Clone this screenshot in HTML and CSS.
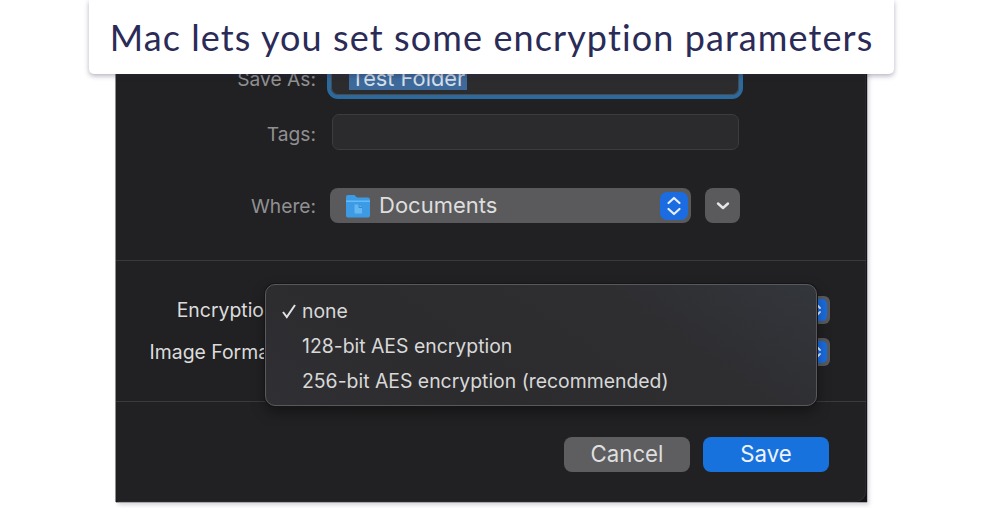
FILE: index.html
```html
<!DOCTYPE html>
<html lang="en">
<head>
  <meta charset="UTF-8">
  <title>Mac lets you set some encryption parameters</title>
  <link rel="stylesheet" href="styles.css">
</head>
<body>
  <div class="caption">Mac lets you set some encryption parameters</div>

  <div class="window">
    <div class="window_inner">
      <section class="top">
        <div class="row save_row">
          <span class="label dim">Save As:</span>
          <div class="save_input"><span class="selected">Test Folder</span></div>
        </div>
        <div class="row tags_row">
          <span class="label dim tags_label">Tags:</span>
          <div class="tags_input"></div>
        </div>
        <div class="row where_row">
          <span class="label dim">Where:</span>
          <div class="where_select">
            <svg class="folder" viewBox="0 0 26 24" width="26" height="24">
              <path d="M1 3C1 1.800 1.800 1 3 1h6.500l2.500 2.500h11C24 3.500 25 4.500 25 6v15.500c0 1.200-.8 2-2 2H3c-1.200 0-2-.8-2-2z" fill="#3d9be6"/>
              <path d="M1 6.500h24V8H1z" fill="#63bdf6"/>
              <path d="M9.500 10.500h4.500l3 3v6h-7.500z" fill="#65b7f1"/>
              <path d="M14 10.500v3h3" fill="none" stroke="#2f8ad6" stroke-width="1"/>
            </svg>
            <span class="where_text">Documents</span>
            <span class="stepper">
              <svg viewBox="0 0 28 28" width="28" height="28">
                <path d="M8.500 11l5.500-5 5.500 5M8.500 17l5.500 5 5.500-5" fill="none" stroke="#e8eefa" stroke-width="2.200" stroke-linecap="round" stroke-linejoin="round"/>
              </svg>
            </span>
          </div>
          <div class="more_button">
            <svg viewBox="0 0 14 10" width="14" height="10">
              <path d="M2 2.500l5 4.500 5-4.500" fill="none" stroke="#e6e6e6" stroke-width="2.400" stroke-linecap="round" stroke-linejoin="round"/>
            </svg>
          </div>
        </div>
      </section>

      <section class="middle">
        <div class="row">
          <span class="label short">Encryption:</span>
          <div class="small_select">
            <span class="small_stepper">
              <svg viewBox="0 0 22 22" width="22" height="22">
                <path d="M7 9l4-4 4 4M7 13l4 4 4-4" fill="none" stroke="#e8eefa" stroke-width="1.800" stroke-linecap="round" stroke-linejoin="round"/>
              </svg>
            </span>
          </div>
        </div>
        <div class="row">
          <span class="label short">Image Format:</span>
          <div class="small_select">
            <span class="small_stepper">
              <svg viewBox="0 0 22 22" width="22" height="22">
                <path d="M7 9l4-4 4 4M7 13l4 4 4-4" fill="none" stroke="#e8eefa" stroke-width="1.800" stroke-linecap="round" stroke-linejoin="round"/>
              </svg>
            </span>
          </div>
        </div>
      </section>

      <section class="bottom">
        <div class="btn cancel">Cancel</div>
        <div class="btn save">Save</div>
      </section>
    </div>

    <ul class="menu">
      <li>
        <svg class="check" viewBox="0 0 16 16" width="16" height="16">
          <path d="M2 9l3.800 5L14 2" fill="none" stroke="#e2e2e2" stroke-width="2"/>
        </svg>
        none
      </li>
      <li>128-bit AES encryption</li>
      <li>256-bit AES encryption (recommended)</li>
    </ul>
  </div>
</body>
</html>
```

FILE: styles.css
```css
* {
  margin: 0;
  padding: 0;
  box-sizing: border-box;
  list-style-type: none;
}

html {font-family: "Inter", "Liberation Sans", sans-serif;}

body {
  background-color: white;
  width: 981px;
  height: 508px;
  overflow: hidden;
  position: relative;
}

.caption {
  position: absolute;
  top: 0;
  left: 89px;
  z-index: 2;
  width: 805px;
  height: 74px;
  padding-top: 14px;
  background-color: white;
  border-radius: 0 0 5px 5px;
  box-shadow: 0 2px 5px rgba(40,40,80,.35);
  color: #2b2b57;
  font-family: "Lato", sans-serif;
  font-size: 36px;
  font-variant-ligatures: none;
  letter-spacing: 1.1px;
  line-height: 47px;
  text-align: center;
  white-space: nowrap;
}

.window {
  position: relative;
  margin-left: 116px;
  width: 751px;
  height: 502px;
  padding-right: 1px;
  background-color: #151517;
  box-shadow: -1px 0 0 #8d8d92, 1px 0 0 #b8b8bc, 0 1px 0 #a8a8ac, 2px 3px 4px rgba(120,120,140,.3);
  color: #dcdcdc;
  font-size: 19.4px;
}

.window_inner {
  height: 100%;
  background-color: #212123;
  border-radius: 0 0 10px 4px;
  box-shadow: inset -1px -1px 0 #2a2a2c;
}

.top {
  height: 261px;
  padding-top: 58px;
  border-bottom: 1px solid #3a3a3c;
}

.row {
  display: flex;
  align-items: center;
}

.label {
  width: 200px;
  text-align: right;
  white-space: nowrap;
}

.label.dim {
  color: #909092;
  font-size: 19.2px;
}

.label.short {
  width: 165px;
}

.label.tags_label {
  padding-top: 3px;
}

.save_input {
  width: 416px;
  height: 41px;
  margin-left: 11px;
  padding: 4px 0 0 18px;
  background-color: #2c2c2e;
  border: 4px solid #2b6a9e;
  border-radius: 11px;
  box-shadow: inset 0 0 0 1px #4a4a4c;
}

.selected {
  display: block;
  width: 118px;
  height: 24px;
  line-height: 24px;
  font-size: 21.800px;
  text-align: center;
  background-color: #3d6a9a;
  color: #d6dfe8;
}

.tags_row {
  margin-top: 15px;
}

.tags_input {
  width: 407px;
  height: 36px;
  margin-left: 16px;
  background-color: #2b2b2d;
  border: 1px solid #3c3c3e;
  border-radius: 7px;
}

.where_row {
  margin-top: 38px;
}

.where_select {
  display: flex;
  align-items: center;
  width: 361px;
  height: 35px;
  margin-left: 14px;
  padding: 0 3px 0 15px;
  background-color: #5a5a5c;
  border-radius: 8px;
}

.folder {
  flex-shrink: 0;
}

.where_text {
  flex-grow: 1;
  margin: -2px 0 0 8px;
  font-size: 22px;
  line-height: 30px;
  color: #dedede;
}

.stepper {
  display: flex;
  width: 28px;
  height: 28px;
  background-color: #1a6ce0;
  border-radius: 7px;
}

.more_button {
  display: flex;
  align-items: center;
  justify-content: center;
  width: 35px;
  height: 35px;
  margin-left: 14px;
  background-color: #5a5a5c;
  border-radius: 8px;
}

.middle {
  display: flex;
  flex-direction: column;
  gap: 14px;
  height: 141px;
  padding-top: 35px;
  border-bottom: 1px solid #3a3a3c;
}

.small_select {
  display: flex;
  justify-content: flex-end;
  width: 535px;
  height: 28px;
  margin-left: 14px;
  padding: 3px;
  background-color: #5a5a5c;
  border-radius: 6px;
}

.small_stepper {
  display: flex;
  width: 22px;
  height: 22px;
  background-color: #1a6ce0;
  border-radius: 5px;
}

.bottom {
  display: flex;
  justify-content: flex-end;
  gap: 13px;
  padding: 35px 37px 0 0;
}

.btn {
  width: 126px;
  height: 35px;
  border-radius: 8px;
  font-size: 22.200px;
  line-height: 34px;
  text-align: center;
}

.cancel {
  background-color: #5e5e60;
  color: #dfdfdf;
}

.save {
  background-color: #1872de;
  color: #f0f4fa;
}

.menu {
  position: absolute;
  top: 284px;
  left: 149px;
  width: 552px;
  height: 122px;
  padding: 9px 0 0 36px;
  background: linear-gradient(215deg, #33363c 0%, #2e2e31 30%, #2c2c2f 70%, #303034 100%);
  border: 1px solid #59595c;
  border-radius: 10px;
  box-shadow: 0 0 0 1px #161618, 0 6px 14px rgba(0,0,0,.4);
  color: #d8d8d8;
}

.menu li {
  position: relative;
  height: 35px;
  line-height: 34px;
  white-space: nowrap;
}

.check {
  position: absolute;
  top: 9px;
  left: -21px;
}
```
